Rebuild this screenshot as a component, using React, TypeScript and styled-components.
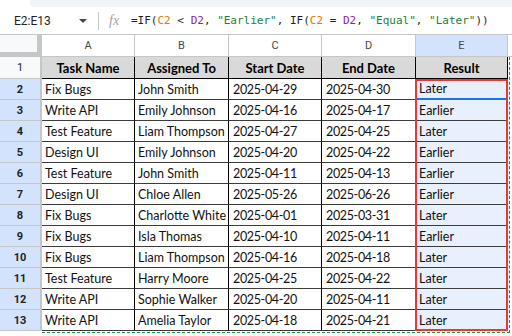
import React from "react";
import styled, { createGlobalStyle } from "styled-components";

const GlobalStyle = createGlobalStyle`
  html, body { margin: 0; padding: 0; background: #ffffff; overflow: hidden; }
  * { box-sizing: border-box; }
`;

const Page = styled.div`
  width: 512px;
  height: 336px;
  display: flex;
  flex-direction: column;
  background: #ffffff;
  overflow: hidden;
`;

const TopStrip = styled.div`
  height: 7px;
  display: flex;
  padding-left: 30px;
`;

const TopStripFill = styled.div`
  flex: 1;
  background: #f1f4f9;
  border-bottom-left-radius: 4px;
`;

const FormulaBar = styled.div`
  height: 28px;
  display: flex;
  align-items: center;
  border-bottom: 1px solid #c4c7c5;
  font-family: Roboto, "Liberation Sans", Arial, sans-serif;
`;

const NameBox = styled.div`
  width: 98px;
  display: flex;
  align-items: center;
  justify-content: space-between;
  padding: 0 11px 0 14px;
  font-size: 12px;
  color: #1f1f1f;
`;

const Caret = styled.span`
  width: 0;
  height: 0;
  border-left: 4px solid transparent;
  border-right: 4px solid transparent;
  border-top: 4px solid #444746;
`;

const Divider = styled.div`
  width: 1px;
  height: 18px;
  background: #c4c7c5;
`;

const Fx = styled.div`
  width: 32px;
  padding-left: 10px;
  font-family: "Liberation Serif", serif;
  font-style: italic;
  font-size: 14px;
  color: #a0a3a6;
`;

const Formula = styled.div`
  font-family: "DejaVu Sans Mono", monospace;
  font-size: 11px;
  color: #1f1f1f;
  white-space: pre;
`;

const Tok = styled.span<{ $c: string }>`
  color: ${(p) => p.$c};
`;

const Grid = styled.div`
  display: grid;
  grid-template-columns: 42px 93px 94px 93px 94px 92px 1fr;
  grid-template-rows: 22px 22px repeat(12, 21px);
  font-family: Lato, "Open Sans", sans-serif;
`;

type Pos = { $r: number; $c: number };

const Placed = styled.div<Pos>`
  grid-row: ${(p) => p.$r};
  grid-column: ${(p) => p.$c};
`;

const Corner = styled(Placed)`
  background: #f8f9fa;
  border-right: 5px solid #c4c7c5;
  border-bottom: 5px solid #c4c7c5;
`;

const ColHead = styled(Placed)<{ $sel?: boolean }>`
  display: flex;
  align-items: center;
  justify-content: center;
  background: ${(p) => (p.$sel ? "#d3e3fd" : "#ffffff")};
  border-right: 1px solid #c4c7c5;
  border-bottom: 1px solid #c4c7c5;
  font-family: Roboto, "Liberation Sans", Arial, sans-serif;
  font-size: 11px;
  color: #444746;
`;

const ColHeadRest = styled(Placed)`
  background: #ffffff;
  border-bottom: 1px solid #c4c7c5;
`;

const RowHead = styled(Placed)<{ $sel?: boolean }>`
  display: flex;
  align-items: center;
  justify-content: center;
  background: ${(p) => (p.$sel ? "#d3e3fd" : "#f8f9fa")};
  border-right: 2px solid #c4c7c5;
  border-bottom: 1px solid #c4c7c5;
  font-family: Roboto, "Liberation Sans", Arial, sans-serif;
  font-size: 11px;
  font-weight: ${(p) => (p.$sel ? 700 : 400)};
  color: #1f1f1f;
`;

const HeadCell = styled(Placed)`
  display: flex;
  align-items: center;
  justify-content: center;
  background: #d9d9d9;
  border-right: 1px solid #000000;
  border-bottom: 1px solid #000000;
  font-size: 13px;
  font-weight: 700;
  color: #000000;
  white-space: nowrap;
  overflow: hidden;
`;

const Cell = styled(Placed)<{ $sel?: boolean; $active?: boolean; $num?: boolean }>`
  display: flex;
  align-items: center;
  padding-left: ${(p) => (p.$num ? 4 : 3)}px;
  background: ${(p) => (p.$sel ? "#e8f0fe" : "#ffffff")};
  border-right: 1px solid #000000;
  border-bottom: ${(p) => (p.$active ? "2px solid #1a73e8" : "1px solid #3c3c3c")};
  font-size: 12.5px;
  letter-spacing: ${(p) => (p.$num ? "-0.35px" : "0")};
  color: #111111;
  white-space: nowrap;
  overflow: hidden;
`;

const Selection = styled.div`
  grid-column: 6;
  grid-row: 3 / 15;
  border: 2px solid #e53935;
  margin-left: -1px;
  pointer-events: none;
  z-index: 2;
`;

const Marquee = styled.div`
  grid-column: 2 / 7;
  grid-row: 2 / 15;
  border-right: 1px dashed #1e8e3e;
  border-bottom: 1px dashed #1e8e3e;
  margin-right: -2px;
  margin-bottom: -2px;
  pointer-events: none;
  z-index: 1;
`;

const rows: [string, string, string, string, string][] = [
  ["Fix Bugs", "John Smith", "2025-04-29", "2025-04-30", "Later"],
  ["Write API", "Emily Johnson", "2025-04-16", "2025-04-17", "Earlier"],
  ["Test Feature", "Liam Thompson", "2025-04-27", "2025-04-25", "Later"],
  ["Design UI", "Emily Johnson", "2025-04-20", "2025-04-22", "Earlier"],
  ["Test Feature", "John Smith", "2025-04-11", "2025-04-13", "Earlier"],
  ["Design UI", "Chloe Allen", "2025-05-26", "2025-06-26", "Earlier"],
  ["Fix Bugs", "Charlotte White", "2025-04-01", "2025-03-31", "Later"],
  ["Fix Bugs", "Isla Thomas", "2025-04-10", "2025-04-11", "Earlier"],
  ["Fix Bugs", "Liam Thompson", "2025-04-16", "2025-04-18", "Later"],
  ["Test Feature", "Harry Moore", "2025-04-25", "2025-04-22", "Later"],
  ["Write API", "Sophie Walker", "2025-04-20", "2025-04-11", "Later"],
  ["Write API", "Amelia Taylor", "2025-04-18", "2025-04-21", "Later"],
];

const headers = ["Task Name", "Assigned To", "Start Date", "End Date", "Result"];

const ORANGE = "#e37400";
const PURPLE = "#8e24aa";
const GREEN = "#188038";
const DARK = "#1f1f1f";

export default function App() {
  return (
    <Page>
      <GlobalStyle />
      <TopStrip>
        <TopStripFill />
      </TopStrip>
      <FormulaBar>
        <NameBox>
          <span>E2:E13</span>
          <Caret />
        </NameBox>
        <Divider />
        <Fx>fx</Fx>
        <Formula>
          <Tok $c={DARK}>=IF(</Tok>
          <Tok $c={ORANGE}>C2</Tok>
          <Tok $c={DARK}> &lt; </Tok>
          <Tok $c={PURPLE}>D2</Tok>
          <Tok $c={DARK}>, </Tok>
          <Tok $c={GREEN}>"Earlier"</Tok>
          <Tok $c={DARK}>, IF(</Tok>
          <Tok $c={ORANGE}>C2</Tok>
          <Tok $c={DARK}> = </Tok>
          <Tok $c={PURPLE}>D2</Tok>
          <Tok $c={DARK}>, </Tok>
          <Tok $c={GREEN}>"Equal"</Tok>
          <Tok $c={DARK}>, </Tok>
          <Tok $c={GREEN}>"Later"</Tok>
          <Tok $c={DARK}>))</Tok>
        </Formula>
      </FormulaBar>
      <Grid>
        <Corner $r={1} $c={1} />
        {["A", "B", "C", "D", "E"].map((l, j) => (
          <ColHead key={l} $r={1} $c={j + 2} $sel={l === "E"}>
            {l}
          </ColHead>
        ))}
        <ColHeadRest $r={1} $c={7} />

        <RowHead $r={2} $c={1}>1</RowHead>
        {headers.map((h, j) => (
          <HeadCell key={h} $r={2} $c={j + 2}>
            {h}
          </HeadCell>
        ))}

        {rows.map((r, i) => (
          <React.Fragment key={i}>
            <RowHead $r={i + 3} $c={1} $sel>
              {i + 2}
            </RowHead>
            {r.map((v, j) => (
              <Cell
                key={j}
                $r={i + 3}
                $c={j + 2}
                $sel={j === 4}
                $active={j === 4 && i === 0}
                $num={j === 2 || j === 3}
              >
                {v}
              </Cell>
            ))}
          </React.Fragment>
        ))}
        <Marquee />
        <Selection />
      </Grid>
    </Page>
  );
}
